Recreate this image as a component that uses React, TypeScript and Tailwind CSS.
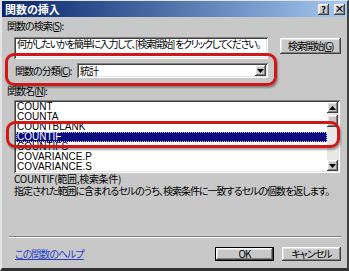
import React from 'react';

const raised = 'bg-[#c8c8c8] shadow-[inset_-1px_-1px_#404040,inset_1px_1px_#ffffff,inset_-2px_-2px_#808080,inset_2px_2px_#e4e4e4]';
const sunken = 'bg-white shadow-[inset_1px_1px_#808080,inset_-1px_-1px_#ffffff,inset_2px_2px_#404040,inset_-2px_-2px_#e4e4e4]';

const functions = ['COUNT', 'COUNTA', 'COUNTBLANK', 'COUNTIF', 'COUNTIFS', 'COVARIANCE.P', 'COVARIANCE.S'];

function Arrow({ up }: { up?: boolean }) {
  return (
    <svg width="7" height="4" viewBox="0 0 7 4" className={up ? 'rotate-180' : ''}>
      <path d="M0 0h7L3.5 4z" fill="#000" />
    </svg>
  );
}

export default function App() {
  return (
    <div
      className="relative w-[349px] h-[271px] overflow-hidden bg-[#c8c8c8] border-t border-l-2 border-r-2 border-b-[3px] border-t-[#e4e4e4] border-l-[#e4e4e4] border-r-[#404040] border-b-[#303030] text-black text-[10px] tracking-[-1px] whitespace-nowrap [font-family:'Noto_Sans_CJK_JP',sans-serif] [font-feature-settings:'palt'_1]"
    >
      {/* title bar */}
      <div className="flex items-center justify-between h-[16px] pl-[3px] pr-[2px] bg-linear-to-r from-[#0a246a] to-[#a6caf0]">
        <span className="text-white font-bold text-[11px] tracking-normal leading-none">関数の挿入</span>
        <div className="flex gap-[5px] tracking-normal">
          <div className={`${raised} w-[11px] h-[11px] flex items-center justify-center text-[9px] font-bold leading-none`}>?</div>
          <div className={`${raised} w-[11px] h-[11px] flex items-center justify-center text-[10px] font-bold leading-none`}>×</div>
        </div>
      </div>

      <div className="pl-[5px] pr-[6px]">
        <div className="mt-[3px] h-[12px] leading-[12px]">
          関数の検索(<span className="underline">S</span>):
        </div>

        <div className="mt-[5px] flex items-start">
          <div className={`${sunken} ml-[7px] w-[254px] h-[22px] pl-[3px] pt-[1px] leading-[12px] tracking-[-1.3px] overflow-hidden`}>
            何がしたいかを簡単に入力して、[検索開始] をクリックしてください。
          </div>
          <div className={`${raised} ml-[12px] mt-[1px] w-[61px] h-[16px] flex items-center justify-center leading-none tracking-[-1.2px]`}>
            検索開始(<span className="underline">G</span>)
          </div>
        </div>

        <div className="mt-[4px] flex items-center h-[15px]">
          <div className="ml-[8px] w-[62px] leading-none">
            関数の分類(<span className="underline">C</span>):
          </div>
          <div className={`${sunken} w-[191px] h-[15px] flex items-center justify-between p-[2px]`}>
            <span className="pl-[1px] leading-none">統計</span>
            <div className={`${raised} w-[11px] h-[11px] flex items-center justify-center`}>
              <Arrow />
            </div>
          </div>
        </div>

        <div className="mt-[7px] h-[12px] leading-[12px]">
          関数名(<span className="underline">N</span>):
        </div>

        <div className={`${sunken} mt-[3px] ml-[7px] w-[326px] h-[73px] p-[2px] flex`}>
          <div className="flex-1 overflow-hidden tracking-normal [font-family:'Liberation_Sans',sans-serif]">
            {functions.map((f) => (
              <div
                key={f}
                className={
                  f === 'COUNTIF'
                    ? 'h-[10px] leading-[10px] pl-[1px] bg-[#0a0a80] text-white outline-1 outline-dotted outline-[#c0c0c0] -outline-offset-1'
                    : 'h-[10px] leading-[10px] pl-[1px]'
                }
              >
                {f}
              </div>
            ))}
          </div>
          <div className="w-[11px] flex flex-col bg-[#e8e8e8]">
            <div className={`${raised} h-[11px] flex items-center justify-center`}>
              <Arrow up />
            </div>
            <div className={`${raised} h-[12px] mt-[2px]`} />
            <div className="flex-1" />
            <div className={`${raised} h-[11px] flex items-center justify-center`}>
              <Arrow />
            </div>
          </div>
        </div>

        <div className="ml-[7px] h-[12px] leading-[12px] tracking-[-0.3px]">COUNTIF(範囲,検索条件)</div>
        <div className="ml-[7px] h-[12px] leading-[12px]">
          指定された範囲に含まれるセルのうち、検索条件に一致するセルの個数を返します。
        </div>

        <div className="mt-[39px] ml-[2px] border-t border-b border-t-[#808080] border-b-white" />

        <div className="mt-[9px] flex items-center">
          <span className="ml-[8px] text-[#2a3fc9] underline leading-none">この関数のヘルプ</span>
          <div className="ml-auto flex gap-[8px]">
            <div className="border border-black">
              <div className={`${raised} w-[57px] h-[12px] flex items-center justify-center leading-none`}>OK</div>
            </div>
            <div className={`${raised} w-[59px] h-[14px] flex items-center justify-center leading-none`}>キャンセル</div>
          </div>
        </div>
      </div>

      {/* annotation outlines */}
      <div className="absolute left-[3px] top-[52px] w-[272px] h-[33px] rounded-[9px] border-[3px] border-[#d01818] shadow-[1px_2px_2px_rgba(0,0,0,0.35)]" />
      <div className="absolute left-[4px] top-[120px] w-[334px] h-[27px] rounded-[9px] border-[3px] border-[#d01818] shadow-[1px_2px_2px_rgba(0,0,0,0.35)]" />
    </div>
  );
}
